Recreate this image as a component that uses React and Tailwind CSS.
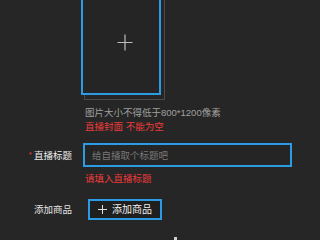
import React from "react";

export default function App() {
  return (
    <div className="w-[320px] h-[240px] overflow-hidden bg-[#262626] font-['Liberation_Sans','Noto_Sans_CJK_SC',sans-serif] text-[9.5px] leading-[13px]">
      {/* cover upload */}
      <div className="flex">
        <div className="w-[81px] shrink-0"></div>
        <div className="flex flex-col">
          <div className="relative -mt-[11px] w-[80px] h-[106px]">
            <div className="absolute left-[3px] top-[4px] w-[81px] h-[107px] border border-[#4a4a4a]"></div>
            <div className="relative w-[80px] h-[106px] border-2 border-[#2b9be3] bg-[#252525] flex items-center justify-center">
              <svg width="16" height="17" viewBox="0 0 16 17" className="mt-[1px] ml-[7px]">
                <path d="M8 0.5v16M0.5 8.5h15" stroke="#bdbdbd" strokeWidth="1.2" fill="none" />
              </svg>
            </div>
          </div>
          <p className="mt-[11px] ml-[4px] text-[#a0a0a0] whitespace-nowrap">图片大小不得低于800*1200像素</p>
          <p className="mt-[1px] ml-[4px] text-[#ec3b3b] whitespace-nowrap">直播封面 不能为空</p>
        </div>
      </div>

      {/* title */}
      <div className="flex items-center mt-[10px]">
        <div className="w-[72px] shrink-0 flex justify-end items-center text-[#eeeeee]">
          <span className="text-[#ec3b3b] text-[8px] mr-[2px] -mt-[2px]">*</span>
          <span>直播标题</span>
        </div>
        <div className="ml-[11px] w-[209px] h-[24px] border-2 border-[#2b9be3] bg-[#252525] flex items-center px-[7px] text-[#7a7a7a]">
          给自播取个标题吧
        </div>
      </div>
      <p className="mt-[5px] ml-[85px] text-[#ec3b3b]">请填入直播标题</p>

      {/* goods */}
      <div className="flex items-center mt-[14px]">
        <div className="w-[72px] shrink-0 text-right text-[#e4e4e4]">添加商品</div>
        <button className="ml-[16px] w-[74px] h-[21px] border-2 border-[#2b9be3] bg-[#1f1f1f] flex items-center justify-center gap-[5px] text-[#f0f0f0] text-[10px]">
          <svg width="9" height="9" viewBox="0 0 9 9">
            <path d="M4.5 0v9M0 4.5h9" stroke="#e0e0e0" strokeWidth="1" fill="none" />
          </svg>
          <span>添加商品</span>
        </button>
      </div>
      <div className="mt-[17px] ml-[174px] w-[3px] h-[3px] bg-[#d0d0d0]"></div>
    </div>
  );
}
